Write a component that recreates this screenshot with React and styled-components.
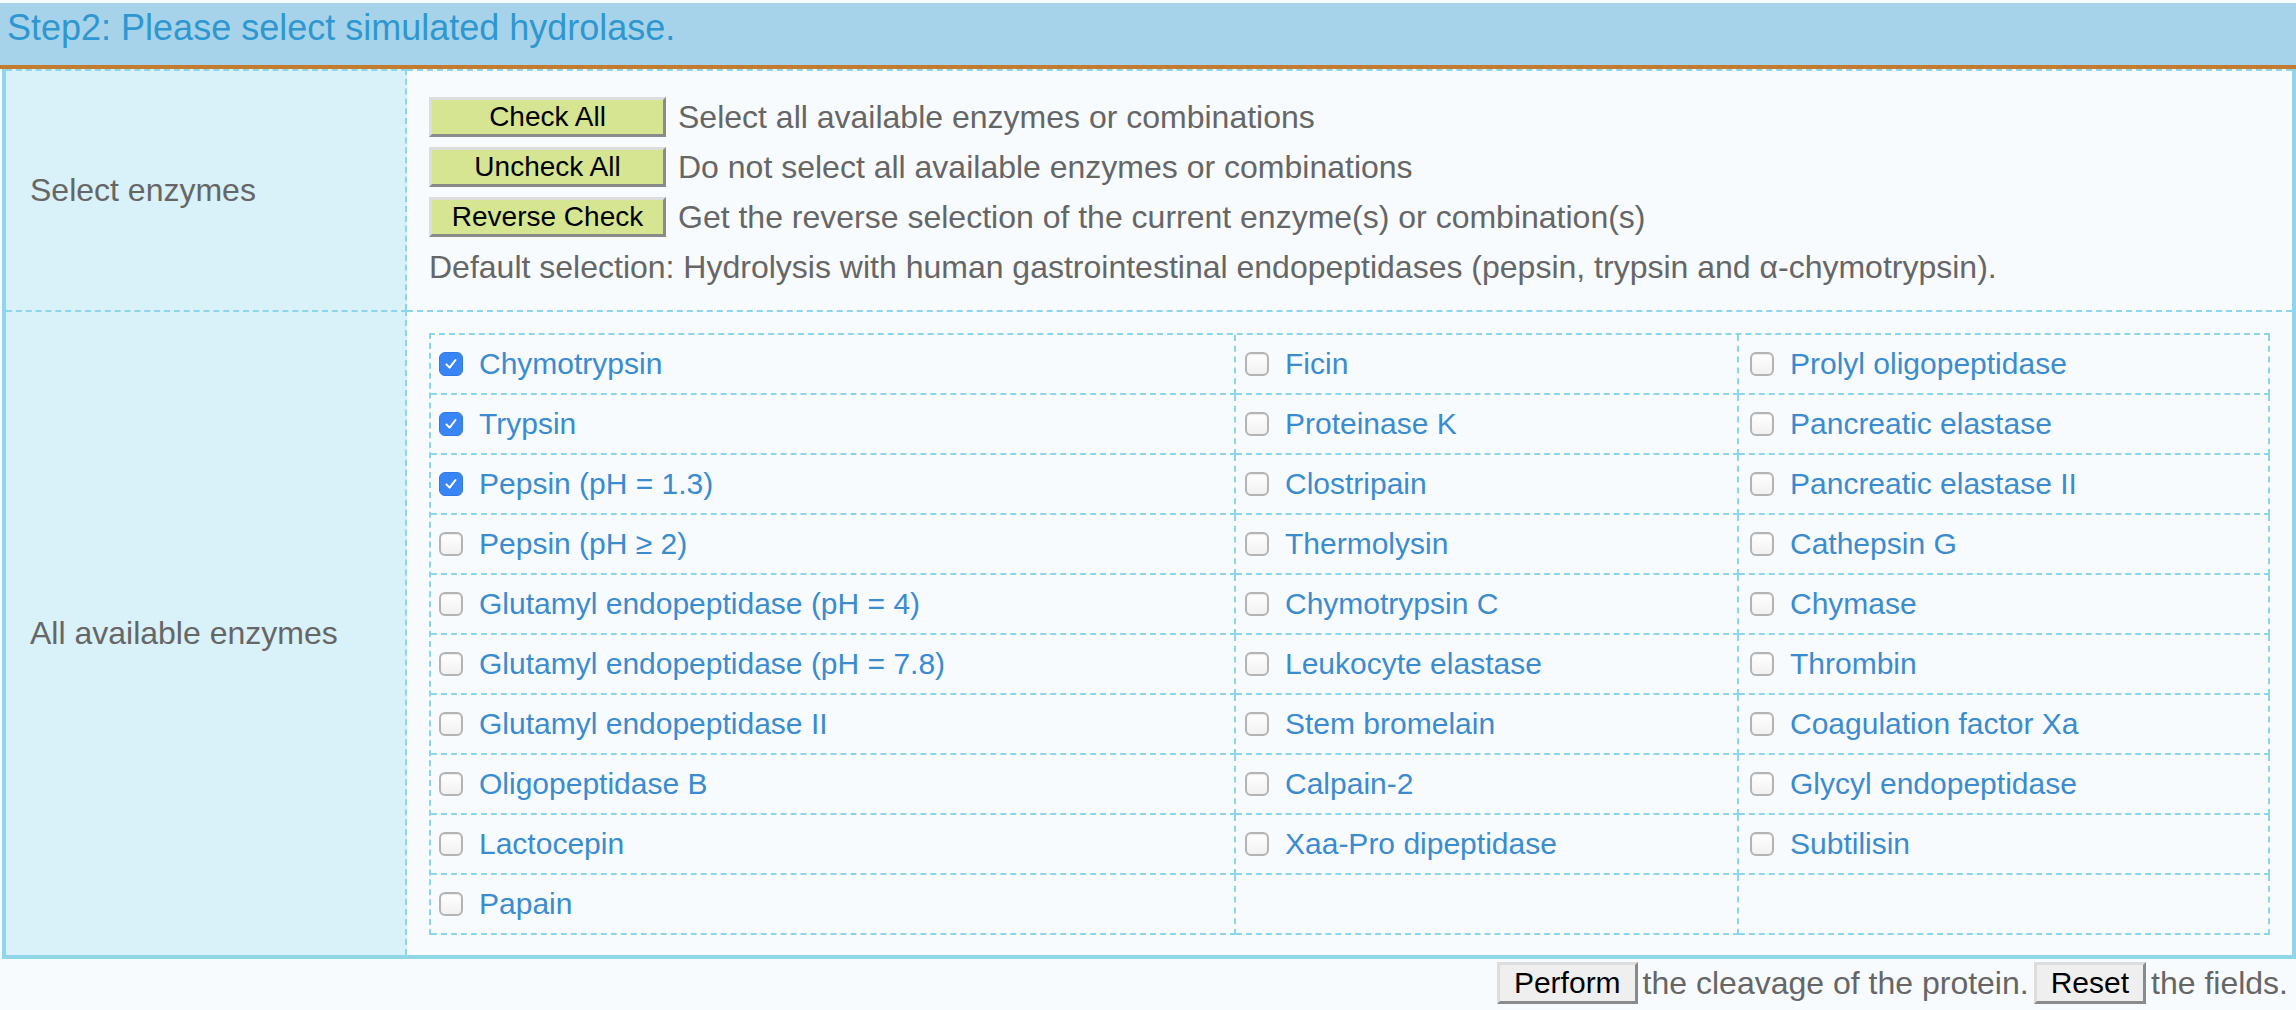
import React, { useState } from "react";
import styled, { createGlobalStyle } from "styled-components";

const GlobalStyle = createGlobalStyle`
  html, body {
    margin: 0;
    padding: 0;
    background-color: #f7fbfd;
    font-family: "Liberation Sans", Arial, sans-serif;
  }
  * {
    box-sizing: border-box;
  }
`

const Page = styled.div`
  padding-top: 3px;
  width: 2296px;
`

const Header = styled.div`
  height: 66px;
  padding: 0 7px;
  background-color: #a7d3ea;
  border-bottom: 4px solid #c27b2f;
  color: #2f97cf;
  font-size: 36px;
  line-height: 50px;
`

const Table = styled.div`
  display: grid;
  grid-template-columns: 401px 1fr;
  margin-left: 2px;
  border-left: 4px solid #8fd6e8;
  border-right: 4px solid #8fd6e8;
  border-bottom: 4px solid #8fd6e8;
`

const LabelCell = styled.div`
  display: flex;
  align-items: center;
  padding-left: 24px;
  background-color: #d9f1f8;
  border-top: 2px dashed #8dd5ea;
  border-right: 2px dashed #8dd5ea;
  color: #666666;
  font-size: 32px;
`

const ContentCell = styled.div`
  padding: ${(p) => p.$pad};
  background-color: #f7fbfd;
  border-top: 2px dashed #8dd5ea;
`

const Line = styled.div`
  display: flex;
  align-items: center;
  height: 50px;
  gap: 12px;
  color: #666666;
  font-size: 32px;
  white-space: nowrap;
`

const GreenButton = styled.button`
  width: 237px;
  height: 40px;
  padding: 0;
  background-color: #d5e592;
  border: 3px solid;
  border-color: #dddddd #8a8a8a #8a8a8a #dddddd;
  color: #000000;
  font-family: "Liberation Sans", Arial, sans-serif;
  font-size: 28px;
  line-height: 32px;
`

const EnzymeGrid = styled.div`
  display: grid;
  grid-template-columns: 805px 503px 1fr;
  border-top: 2px dashed #8dd5ea;
  border-left: 2px dashed #8dd5ea;
`

const EnzymeCell = styled.label`
  display: flex;
  align-items: center;
  gap: 16px;
  height: 60px;
  padding-left: ${(p) => p.$indent}px;
  border-right: 2px dashed #8dd5ea;
  border-bottom: 2px dashed #8dd5ea;
  color: #3b8bd0;
  font-size: 30px;
  white-space: nowrap;
  cursor: pointer;
`

const Box = styled.span`
  display: inline-flex;
  align-items: center;
  justify-content: center;
  flex: none;
  width: 24px;
  height: 24px;
  border-radius: 6px;
  background: ${(p) => (p.$checked ? "#3a85f6" : "linear-gradient(#ffffff, #f1f1f1)")};
  border: ${(p) => (p.$checked ? "1px solid #3478e8" : "2px solid #b4b4b4")};
  box-shadow: ${(p) => (p.$checked ? "none" : "inset 0 1px 1px rgba(0,0,0,0.08)")};
`

const Footer = styled.div`
  display: flex;
  justify-content: flex-end;
  align-items: center;
  gap: 5px;
  padding: 3px 8px 0 0;
  color: #666666;
  font-size: 32px;
  white-space: nowrap;
`

const GreyButton = styled.button`
  height: 42px;
  padding: 0 14px;
  background-color: #efefef;
  border: 3px solid;
  border-color: #dddddd #8a8a8a #8a8a8a #dddddd;
  color: #000000;
  font-family: "Liberation Sans", Arial, sans-serif;
  font-size: 30px;
  line-height: 34px;
`

const rows = [
  ["Chymotrypsin", "Ficin", "Prolyl oligopeptidase"],
  ["Trypsin", "Proteinase K", "Pancreatic elastase"],
  ["Pepsin (pH = 1.3)", "Clostripain", "Pancreatic elastase II"],
  ["Pepsin (pH \u2265 2)", "Thermolysin", "Cathepsin G"],
  ["Glutamyl endopeptidase (pH = 4)", "Chymotrypsin C", "Chymase"],
  ["Glutamyl endopeptidase (pH = 7.8)", "Leukocyte elastase", "Thrombin"],
  ["Glutamyl endopeptidase II", "Stem bromelain", "Coagulation factor Xa"],
  ["Oligopeptidase B", "Calpain-2", "Glycyl endopeptidase"],
  ["Lactocepin", "Xaa-Pro dipeptidase", "Subtilisin"],
  ["Papain", null, null],
]

const allNames = rows.flat().filter(Boolean)
const defaults = ["Chymotrypsin", "Trypsin", "Pepsin (pH = 1.3)"]
const indents = [8, 9, 11]

const Check = () => (
  <svg width="14" height="14" viewBox="0 0 14 14">
    <path d="M2.5 7.5 L5.6 10.6 L11.5 3" fill="none" stroke="#ffffff" strokeWidth="2" strokeLinecap="round" strokeLinejoin="round" />
  </svg>
)

const App = () => {
  const [checked, setChecked] = useState(defaults)

  const toggle = (name) =>
    setChecked((c) => (c.includes(name) ? c.filter((n) => n !== name) : [...c, name]))

  return (
    <Page>
      <GlobalStyle />
      <Header>Step2: Please select simulated hydrolase.</Header>
      <Table>
        <LabelCell>Select enzymes</LabelCell>
        <ContentCell $pad="21px 22px 18px 22px">
          <Line>
            <GreenButton onClick={() => setChecked(allNames)}>Check All</GreenButton>
            Select all available enzymes or combinations
          </Line>
          <Line>
            <GreenButton onClick={() => setChecked([])}>Uncheck All</GreenButton>
            Do not select all available enzymes or combinations
          </Line>
          <Line>
            <GreenButton onClick={() => setChecked((c) => allNames.filter((n) => !c.includes(n)))}>
              Reverse Check
            </GreenButton>
            Get the reverse selection of the current enzyme(s) or combination(s)
          </Line>
          <Line>
            Default selection: Hydrolysis with human gastrointestinal endopeptidases (pepsin, trypsin and α-chymotrypsin).
          </Line>
        </ContentCell>
        <LabelCell>All available enzymes</LabelCell>
        <ContentCell $pad="21px 22px 20px 22px">
          <EnzymeGrid>
            {rows.map((row, i) =>
              row.map((name, j) => (
                <EnzymeCell key={i + "-" + j} $indent={indents[j]}>
                  {name && (
                    <>
                      <Box $checked={checked.includes(name)} onClick={() => toggle(name)}>
                        {checked.includes(name) && <Check />}
                      </Box>
                      {name}
                    </>
                  )}
                </EnzymeCell>
              ))
            )}
          </EnzymeGrid>
        </ContentCell>
      </Table>
      <Footer>
        <GreyButton>Perform</GreyButton>
        the cleavage of the protein.
        <GreyButton>Reset</GreyButton>
        the fields.
      </Footer>
    </Page>
  );
}

export default App
